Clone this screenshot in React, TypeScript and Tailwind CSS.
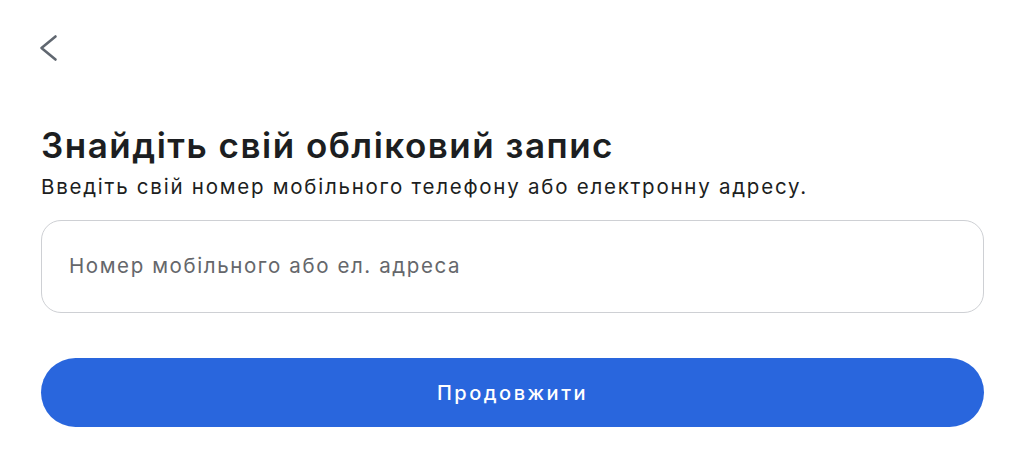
export default function App() {
  return (
    <div
      className="w-[1024px] h-[453px] bg-white text-[#1c1e21] pl-[41px] pr-[40px] pt-[34px]"
      style={{ fontFamily: 'Inter, "Open Sans", sans-serif' }}
    >
      {/* Back */}
      <button className="block w-[30px] h-[30px] -ml-[4px]">
        <svg viewBox="0 0 30 30" className="w-[30px] h-[30px]" fill="none" stroke="#606770" strokeWidth="2.6" strokeLinecap="round" strokeLinejoin="round">
          <path d="M18.5 2.5L4.5 14L18.5 25.5" />
        </svg>
      </button>

      <h1 className="mt-[61px] text-[35px] leading-[40px] font-semibold tracking-[1.5px]">
        Знайдіть свій обліковий запис
      </h1>
      <p className="mt-[9px] text-[20.5px] leading-[26px] tracking-[1.75px]">
        Введіть свій номер мобільного телефону або електронну адресу.
      </p>

      <div className="mt-[20px] h-[93px] rounded-[20px] border border-[#ced0d4] flex items-center px-[27px]">
        <span className="text-[20.5px] tracking-[1.6px] text-[#65676b]">Номер мобільного або ел. адреса</span>
      </div>

      <button className="mt-[45px] w-full h-[69px] rounded-full bg-[#2966dd] text-white text-[20px] tracking-[2.5px] font-medium">
        Продовжити
      </button>
    </div>
  );
}
